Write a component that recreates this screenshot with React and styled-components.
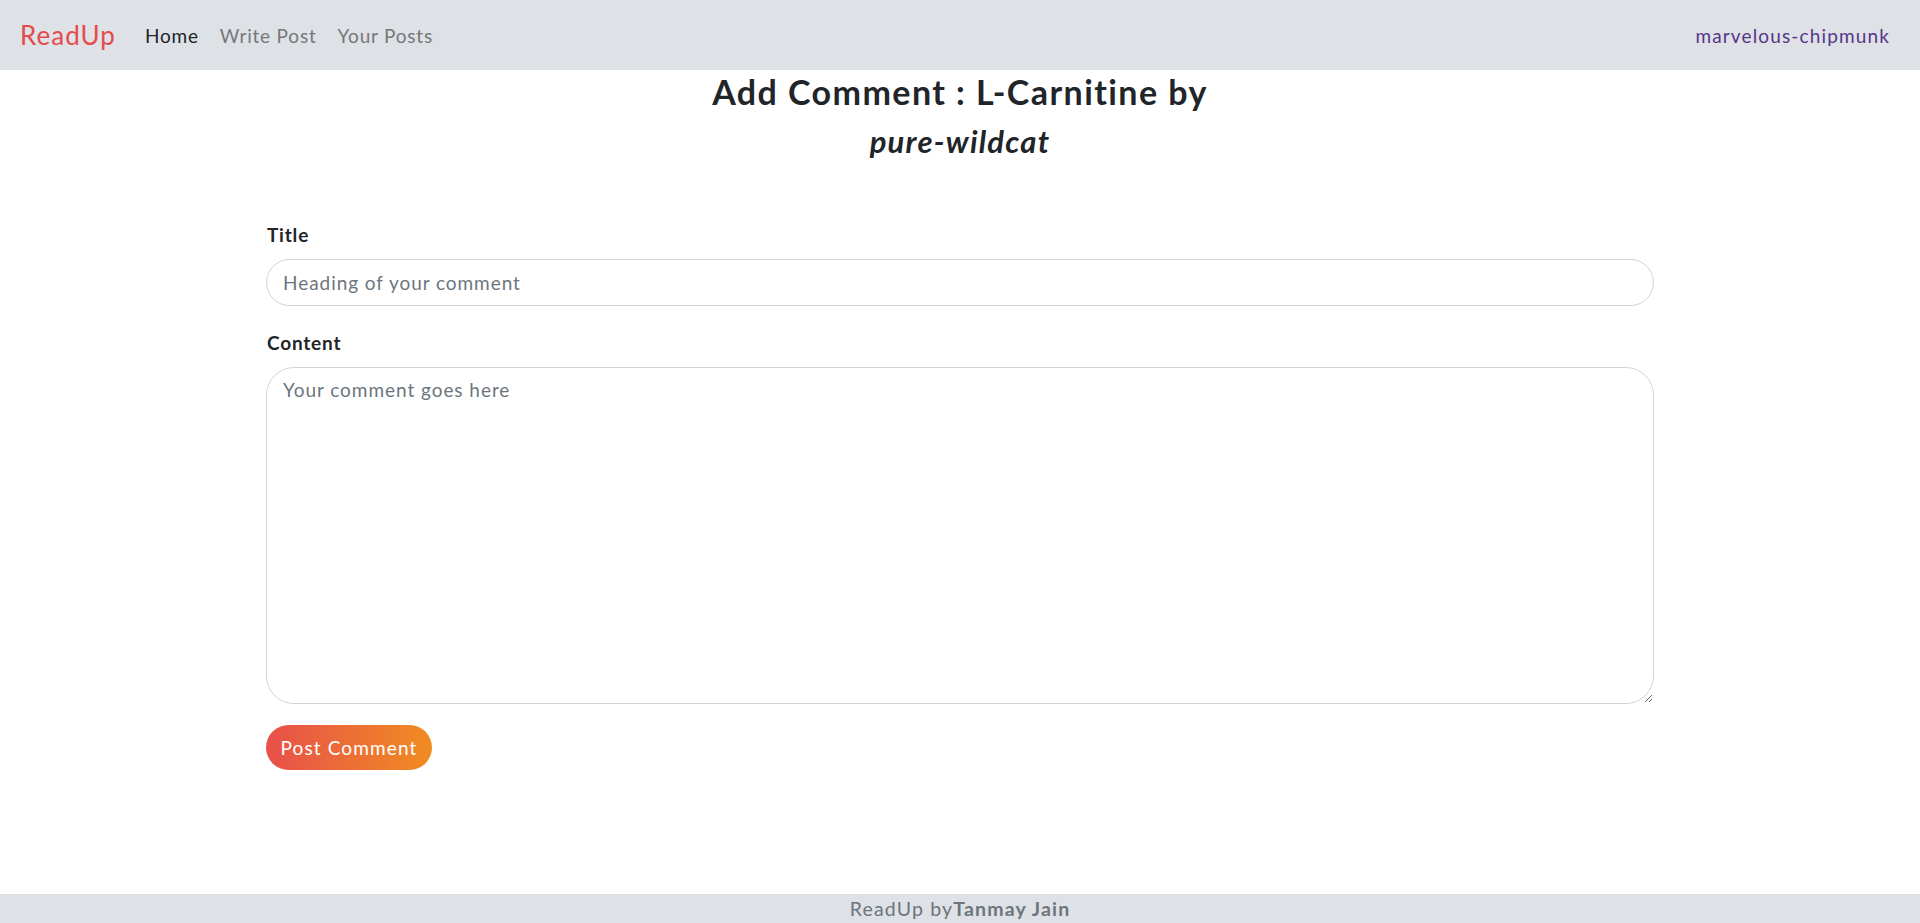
import React from "react";
import styled, { createGlobalStyle } from "styled-components";

const Global = createGlobalStyle`
  html, body { margin: 0; padding: 0; }
  body {
    font-family: Lato, "Noto Sans", sans-serif;
    color: #212529;
    background: #fff;
    letter-spacing: 0.05em;
  }
  * { box-sizing: border-box; }
`;

const Page = styled.div`
  min-height: 100vh;
  display: flex;
  flex-direction: column;
`;

const Nav = styled.nav`
  height: 70px;
  background: #dee1e6;
  display: flex;
  align-items: center;
  padding: 0 30px 0 20px;
`;

const Brand = styled.a`
  font-size: 26px;
  letter-spacing: 0.04em;
  color: #e64a4a;
  text-decoration: none;
  margin-right: 29px;
`;

const Links = styled.div`
  display: flex;
  gap: 21px;
  flex: 1;
`;

const NavLink = styled.a`
  font-size: 19px;
  color: ${(p) => (p.$active ? "#212529" : "#757779")};
  text-decoration: none;
`;

const User = styled.a`
  font-size: 19px;
  letter-spacing: 0.06em;
  color: #55368a;
  text-decoration: none;
`;

const Main = styled.main`
  flex: 1;
`;

const Heading = styled.h1`
  margin: 0;
  text-align: center;
  font-size: 34px;
  letter-spacing: 0.042em;
  font-weight: 700;
  line-height: 44px;
  color: #212529;
`;

const Author = styled.em`
  display: block;
  font-style: italic;
  font-size: 31px;
  line-height: 54px;
  letter-spacing: 0.04em;
  font-weight: 700;
`;

const Form = styled.form`
  width: 1388px;
  margin: 55px auto 0;
  display: flex;
  flex-direction: column;
  align-items: flex-start;
`;

const Label = styled.label`
  font-size: 19px;
  font-weight: 700;
  line-height: 24px;
  margin: ${(p) => (p.$first ? "0" : "25px")} 0 12px 1px;
  color: #212529;
`;

const Field = styled.input`
  width: 100%;
  height: 47px;
  border: 1px solid #ced4da;
  border-radius: 24px;
  padding: 0 16px;
  font-family: inherit;
  font-size: 19px;
  letter-spacing: 0.05em;
  color: #212529;
  outline: none;
  &::placeholder { color: #6c757d; }
`;

const Area = styled.textarea`
  width: 100%;
  height: 337px;
  border: 1px solid #ced4da;
  border-radius: 28px;
  padding: 8px 16px;
  font-family: inherit;
  font-size: 19px;
  letter-spacing: 0.05em;
  line-height: 28px;
  color: #212529;
  outline: none;
  &::placeholder { color: #6c757d; }
`;

const Submit = styled.button`
  margin-top: 21px;
  height: 45px;
  width: 166px;
  border: none;
  border-radius: 23px;
  background: linear-gradient(90deg, #e8504a 0%, #f08c22 100%);
  color: #fff;
  font-family: inherit;
  font-size: 19px;
  letter-spacing: 0.06em;
  cursor: pointer;
`;

const Footer = styled.footer`
  height: 29px;
  background: #dee1e6;
  display: flex;
  align-items: center;
  justify-content: center;
  font-size: 19.5px;
  letter-spacing: 0.06em;
  color: #6c757d;
`;

const Strong = styled.b`
  font-weight: 700;
`;

export default function App() {
  return (
    <Page>
      <Global />
      <Nav>
        <Brand href="#">ReadUp</Brand>
        <Links>
          <NavLink $active href="#">Home</NavLink>
          <NavLink href="#">Write Post</NavLink>
          <NavLink href="#">Your Posts</NavLink>
        </Links>
        <User href="#">marvelous-chipmunk</User>
      </Nav>
      <Main>
        <Heading>
          Add Comment : L-Carnitine by
          <Author>pure-wildcat</Author>
        </Heading>
        <Form onSubmit={(e) => e.preventDefault()}>
          <Label $first htmlFor="title">Title</Label>
          <Field id="title" placeholder="Heading of your comment" />
          <Label htmlFor="content">Content</Label>
          <Area id="content" placeholder="Your comment goes here" />
          <Submit type="submit">Post Comment</Submit>
        </Form>
      </Main>
      <Footer>
        ReadUp by<Strong>Tanmay Jain</Strong>
      </Footer>
    </Page>
  );
}
